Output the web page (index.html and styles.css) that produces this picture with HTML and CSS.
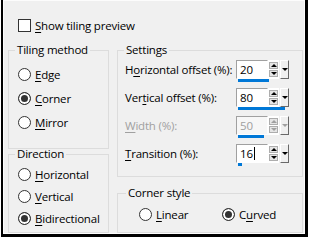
FILE: index.html
```html
<!DOCTYPE html>
<html lang="en">
<head>
    <meta charset="UTF-8">
    <title>Tiling</title>
    <link rel="stylesheet" href="styles.css">
</head>
<body>
<div class="frame">
    <div class="panel">
        <label class="check-row">
            <span class="checkbox"></span>
            <span><u>S</u>how tiling preview</span>
        </label>

        <div class="columns">
            <div class="column">
                <fieldset class="group method">
                    <legend>Tiling method</legend>
                    <div class="radio"><span class="dot"></span><span><u>E</u>dge</span></div>
                    <div class="radio on"><span class="dot"></span><span><u>C</u>orner</span></div>
                    <div class="radio"><span class="dot"></span><span><u>M</u>irror</span></div>
                </fieldset>

                <fieldset class="group direction">
                    <legend>Direction</legend>
                    <div class="radio"><span class="dot"></span><span><u>H</u>orizontal</span></div>
                    <div class="radio"><span class="dot"></span><span><u>V</u>ertical</span></div>
                    <div class="radio on"><span class="dot"></span><span><u>B</u>idirectional</span></div>
                </fieldset>
            </div>

            <div class="column">
                <fieldset class="group settings">
                    <legend>Settings</legend>
                    <div class="field-row">
                        <span class="field-label">H<u>o</u>rizontal offset (%):</span>
                        <div class="spin">
                            <div class="spin-body">
                                <div class="spin-field">20</div>
                                <div class="spin-arrows"><span class="arrow up"></span><span class="arrow down"></span></div>
                                <div class="spin-drop"></div>
                            </div>
                            <div class="spin-bar" style="width: 31px"></div>
                        </div>
                    </div>
                    <div class="field-row">
                        <span class="field-label">Ver<u>t</u>ical offset (%):</span>
                        <div class="spin">
                            <div class="spin-body">
                                <div class="spin-field">80</div>
                                <div class="spin-arrows"><span class="arrow up"></span><span class="arrow down"></span></div>
                                <div class="spin-drop"></div>
                            </div>
                            <div class="spin-bar" style="width: 47px"></div>
                        </div>
                    </div>
                    <div class="field-row wide-gap disabled">
                        <span class="field-label"><u>W</u>idth (%):</span>
                        <div class="spin">
                            <div class="spin-body">
                                <div class="spin-field">50</div>
                                <div class="spin-arrows"><span class="arrow up"></span><span class="arrow down"></span></div>
                                <div class="spin-drop"></div>
                            </div>
                            <div class="spin-bar" style="width: 26px"></div>
                        </div>
                    </div>
                    <div class="field-row">
                        <span class="field-label"><u>T</u>ransition (%):</span>
                        <div class="spin">
                            <div class="spin-body">
                                <div class="spin-field">16<span class="caret"></span></div>
                                <div class="spin-arrows"><span class="arrow up"></span><span class="arrow down"></span></div>
                                <div class="spin-drop"></div>
                            </div>
                            <div class="spin-bar" style="width: 4px"></div>
                        </div>
                    </div>
                </fieldset>

                <fieldset class="group corner">
                    <legend>Corner style</legend>
                    <div class="radio-line">
                        <div class="radio linear"><span class="dot"></span><span><u>L</u>inear</span></div>
                        <div class="radio on"><span class="dot"></span><span>C<u>u</u>rved</span></div>
                    </div>
                </fieldset>
            </div>
        </div>
    </div>
</div>
</body>
</html>
```

FILE: styles.css
```css
* {
    margin: 0;
    padding: 0;
    box-sizing: border-box;
}

body {
    background: #fff;
    font-family: 'Open Sans', 'Noto Sans', sans-serif;
    font-size: 11.5px;
    letter-spacing: -0.2px;
    color: #000;
    white-space: nowrap;
}

u {
    text-decoration-thickness: 1px;
    text-underline-offset: 2px;
}

.frame {
    margin-left: 1px;
    width: 307px;
    height: 237px;
    border-left: 2px solid #000;
    border-right: 3px solid #000;
    border-bottom: 3px solid #000;
}

.panel {
    height: 100%;
    background: #f0f0f0;
    border: 1px solid #fcfcfc;
    padding: 18px 0 0 4px;
}

.check-row {
    display: flex;
    align-items: center;
    gap: 4px;
    height: 13px;
    margin-left: 10px;
}

.checkbox {
    width: 13px;
    height: 13px;
    border: 1px solid #333;
    background: #fff;
}

.columns {
    display: grid;
    grid-template-columns: 101px 186px;
    column-gap: 8px;
    margin-top: 13px;
}

.column {
    display: flex;
    flex-direction: column;
}

/* group boxes */
.group {
    border: 1px solid #dcdcdc;
    min-width: 0;
}

.group legend {
    line-height: 10px;
    padding: 0 2px;
    margin-left: 6px;
}

.corner legend {
    margin-left: 8px;
}

.method {
    height: 104px;
    padding-top: 7px;
}

.method .radio,
.direction .radio {
    margin-left: 9px;
}

.direction {
    height: 84px;
    padding-top: 4px;
}

.direction .radio {
    height: 22px;
}

.settings {
    height: 132px;
    padding-top: 5px;
}

.corner {
    height: 45px;
    margin-top: 11px;
    padding-top: 4px;
}

/* radio buttons */
.radio {
    display: flex;
    align-items: center;
    gap: 4px;
    height: 24px;
}

.dot {
    width: 13px;
    height: 13px;
    border: 1px solid #333;
    border-radius: 50%;
    background: #fff;
}

.radio.on .dot {
    background: #333;
    box-shadow: inset 0 0 0 2px #fff;
}

.radio-line {
    display: flex;
    margin-left: 21px;
}

.linear {
    width: 83px;
}

/* spin edit controls */
.field-row {
    display: flex;
    align-items: flex-start;
    height: 21px;
    margin: 0 0 7px 7px;
}

.field-row.wide-gap {
    margin-top: 6px;
}

.field-label {
    width: 111px;
    line-height: 19px;
}

.spin {
    width: 53px;
}

.spin-body {
    display: flex;
    height: 19px;
}

.spin-field {
    width: 32px;
    background: #fff;
    border: 1px solid;
    border-color: #a0a0a0 #fff #fff #a0a0a0;
    padding-left: 3px;
    display: flex;
    align-items: center;
}

.caret {
    width: 1px;
    height: 13px;
    margin-left: 1px;
    background: #000;
}

.spin-arrows {
    width: 11px;
    background: #fff;
    display: flex;
    flex-direction: column;
    justify-content: center;
    gap: 1px;
    padding-left: 1px;
}

.arrow {
    width: 9px;
    height: 7px;
    background: #e5e5e5;
    border: 1px solid #adadad;
    display: flex;
    align-items: center;
    justify-content: center;
}

.arrow::after {
    content: "";
    border-left: 3px solid transparent;
    border-right: 3px solid transparent;
}

.arrow.up::after {
    border-bottom: 3px solid #000;
}

.arrow.down::after {
    border-top: 3px solid #000;
}

.spin-drop {
    width: 9px;
    margin-left: 1px;
    background: #f0f0f0;
    border: 1px solid;
    border-color: #fff #696969 #696969 #fff;
    display: flex;
    align-items: center;
    justify-content: center;
}

.spin-drop::after {
    content: "";
    border-left: 3px solid transparent;
    border-right: 3px solid transparent;
    border-top: 3px solid #000;
}

.spin-bar {
    height: 3px;
    margin-left: 2px;
    background: #0078d7;
}

.disabled .field-label,
.disabled .spin-field {
    color: #a0a0a0;
}

.disabled .spin-field {
    background: #f7f7f7;
}

.disabled .arrow::after,
.disabled .spin-drop::after {
    border-top-color: #a0a0a0;
    border-bottom-color: #a0a0a0;
}
```
